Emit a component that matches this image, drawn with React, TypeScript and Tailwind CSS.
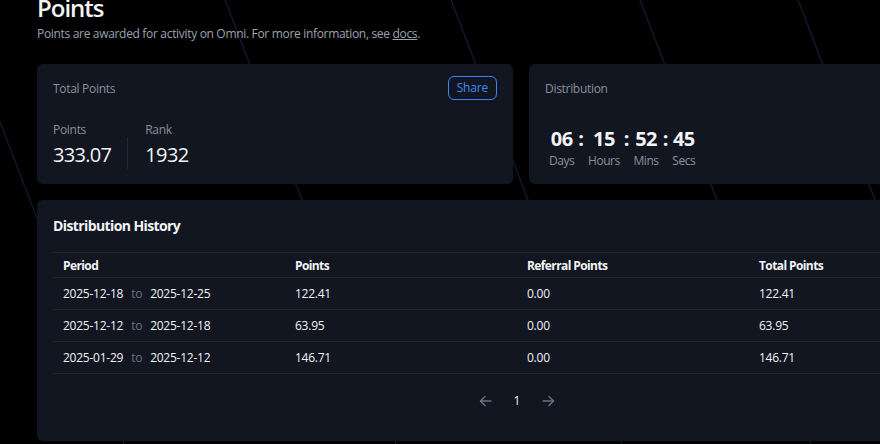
import React from "react";

const rows = [
  { from: "2025-12-18", to: "2025-12-25", points: "122.41", ref: "0.00", total: "122.41" },
  { from: "2025-12-12", to: "2025-12-18", points: "63.95", ref: "0.00", total: "63.95" },
  { from: "2025-01-29", to: "2025-12-12", points: "146.71", ref: "0.00", total: "146.71" },
];

const lineStarts = [-47, 225, 451, 640, 798, 935];

function Lines() {
  return (
    <svg className="absolute inset-0 pointer-events-none" width="880" height="444" viewBox="0 0 880 444">
      {lineStarts.map((x) => (
        <line key={x} x1={x} y1={0} x2={x + 0.385 * 444} y2={444} stroke="#0e1b2c" strokeWidth="1.4" />
      ))}
    </svg>
  );
}

function Arrow({ dir }: { dir: "left" | "right" }) {
  return (
    <svg width="13" height="12" viewBox="0 0 13 12" fill="none" stroke="#6b7280" strokeWidth="1.4" strokeLinecap="round" strokeLinejoin="round">
      {dir === "left" ? (
        <>
          <path d="M12 6H1.5" />
          <path d="M6 1.5L1.5 6L6 10.5" />
        </>
      ) : (
        <>
          <path d="M1 6H11.5" />
          <path d="M7 1.5L11.5 6L7 10.5" />
        </>
      )}
    </svg>
  );
}

const digit = "text-[20px] leading-[24px] font-bold text-center text-[#f3f4f6] tracking-[-0.5px]";
const colon = "text-[20px] leading-[24px] font-bold text-[#f3f4f6] px-[1px]";
const unit = "text-[12px] leading-[16px] text-center text-[#8b909b] tracking-[-0.45px]";

export default function App() {
  return (
    <div className="relative w-[880px] h-[444px] overflow-hidden bg-black text-[#e5e7eb] font-['Open_Sans',sans-serif]">
      <Lines />
      <div className="relative pl-[37px] mt-[-8px]">
        <h1 className="text-[24px] leading-[32px] font-semibold text-[#f3f4f6] tracking-[-1px]">Points</h1>
        <p className="text-[12px] leading-[16px] text-[#9ca3af] mt-[2px] tracking-[-0.32px]">
          Points are awarded for activity on Omni. For more information, see{" "}
          <span className="underline">docs</span>.
        </p>

        <div className="flex gap-4 mt-[22px]">
          <div className="w-[476px] h-[120px] shrink-0 rounded-md bg-[#121621] px-4 pt-3">
            <div className="flex items-center justify-between h-[24px]">
              <span className="text-[12px] text-[#8b909b] tracking-[-0.3px] mt-[1px]">Total Points</span>
              <button className="h-[24px] px-[8px] rounded-md border border-[#3b82f6] text-[12px] leading-[22px] text-[#3b8bf6] tracking-[-0.2px]">
                Share
              </button>
            </div>
            <div className="flex mt-[22px]">
              <div className="pr-4">
                <div className="text-[12px] leading-[16px] text-[#8b909b] tracking-[-0.3px]">Points</div>
                <div className="text-[20px] leading-[28px] mt-[3px] text-[#f3f4f6] tracking-[-0.7px]">333.07</div>
              </div>
              <div className="flex items-end">
                <div className="w-px h-[32px] bg-[#232838]" />
              </div>
              <div className="pl-[17px]">
                <div className="text-[12px] leading-[16px] text-[#8b909b] tracking-[-0.3px]">Rank</div>
                <div className="text-[20px] leading-[28px] mt-[3px] text-[#f3f4f6] tracking-[-0.6px]">1932</div>
              </div>
            </div>
          </div>

          <div className="w-[476px] h-[120px] shrink-0 rounded-md bg-[#121621] px-4 pt-3">
            <div className="flex items-center h-[24px]">
              <span className="text-[12px] text-[#8b909b] tracking-[-0.3px] mt-[1px]">Distribution</span>
            </div>
            <div className="grid grid-cols-[auto_auto_auto_auto_auto_auto_auto] justify-start gap-x-[3px] mt-[27px] pl-[4px] items-center">
              <span className={digit}>06</span>
              <span className={colon}>:</span>
              <span className={digit}>15</span>
              <span className={colon}>:</span>
              <span className={digit}>52</span>
              <span className={colon}>:</span>
              <span className={digit}>45</span>
              <span className={unit + " mt-[2px]"}>Days</span>
              <span />
              <span className={unit + " mt-[2px]"}>Hours</span>
              <span />
              <span className={unit + " mt-[2px]"}>Mins</span>
              <span />
              <span className={unit + " mt-[2px]"}>Secs</span>
            </div>
          </div>
        </div>

        <div className="w-[960px] h-[241px] mt-4 rounded-md bg-[#121621] px-4 pt-[17px]">
          <h2 className="text-[14px] leading-[18px] font-bold text-[#f3f4f6] tracking-[-0.6px]">Distribution History</h2>
          <table className="w-full mt-[17px] border-collapse text-[12px] table-fixed">
            <thead>
              <tr className="border-t border-b border-[#1f2433] h-[25px]">
                <th className="text-left font-bold pl-[10px] pt-[2px] text-[#f3f4f6] tracking-[-0.6px]">Period</th>
                <th className="text-left font-bold pl-[10px] pt-[2px] text-[#f3f4f6] tracking-[-0.6px]">Points</th>
                <th className="text-left font-bold pl-[10px] pt-[2px] text-[#f3f4f6] tracking-[-0.6px]">Referral Points</th>
                <th className="text-left font-bold pl-[10px] pt-[2px] text-[#f3f4f6] tracking-[-0.6px]">Total Points</th>
              </tr>
            </thead>
            <tbody>
              {rows.map((r) => (
                <tr key={r.from} className="border-b border-[#1f2433] h-[32px] text-[#f3f4f6] tracking-[-0.25px]">
                  <td className="pl-[10px] pt-[1px]">
                    {r.from}
                    <span className="mx-[8px] text-[#6b7280]">to</span>
                    {r.to}
                  </td>
                  <td className="pl-[10px] pt-[1px]">{r.points}</td>
                  <td className="pl-[10px] pt-[1px]">{r.ref}</td>
                  <td className="pl-[10px] pt-[1px]">{r.total}</td>
                </tr>
              ))}
            </tbody>
          </table>
          <div className="flex items-center justify-center gap-[22px] mt-[17px] h-[20px]">
            <Arrow dir="left" />
            <span className="text-[12px] leading-[16px] text-[#f3f4f6]">1</span>
            <Arrow dir="right" />
          </div>
        </div>
      </div>
    </div>
  );
}
